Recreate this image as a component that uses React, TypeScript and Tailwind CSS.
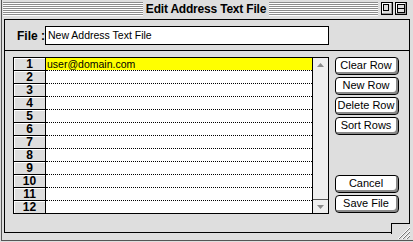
import React from "react";

function Btn({ label }: { label: string }) {
  return (
    <div className="h-[18px] w-[64px] rounded-[4px] border border-black bg-white shadow-[inset_-2px_-2px_0_#8a8a8a,inset_1px_1px_0_#ffffff] flex items-center justify-center pr-[2px] pb-[1px] text-[11px] leading-none text-black">
      {label}
    </div>
  );
}

function Stripes({ className }: { className: string }) {
  return (
    <div
      className={
        "h-[14px] bg-[repeating-linear-gradient(to_bottom,#8c8c8c_0px,#8c8c8c_1px,#ffffff_1px,#ffffff_2px)] " +
        className
      }
    />
  );
}

export default function App() {
  const rows = Array.from({ length: 12 }, (_, i) => i + 1);
  return (
    <div className="relative w-[413px] h-[242px] bg-[#dedede] overflow-hidden font-['Liberation_Sans',Arial,sans-serif] text-black">
      <div className="pl-[1px] h-[242px]">
        <div className="h-[241px] border-l border-b border-[#555555]">
          {/* Title bar */}
          <div className="h-[19px] flex items-start pt-[2px] pl-[1px] pr-[6px]">
            <Stripes className="w-[140px]" />
            <div className="w-[126px] h-[14px] flex items-center justify-center text-[12px] font-bold leading-none tracking-[-0.2px]">
              Edit Address Text File
            </div>
            <Stripes className="flex-1" />
            <div className="ml-[3px] flex gap-[2px]">
              <svg width="12" height="13" viewBox="0 0 12 13">
                <rect x="0.5" y="0.5" width="11" height="12" fill="#dedede" stroke="#000" />
                <rect x="1" y="1" width="10" height="1" fill="#fff" />
                <rect x="1" y="1" width="1" height="11" fill="#fff" />
                <rect x="1" y="11" width="10" height="1" fill="#999" />
                <rect x="10" y="1" width="1" height="11" fill="#999" />
                <rect x="2.5" y="2.5" width="5" height="6" fill="none" stroke="#000" />
              </svg>
              <svg width="12" height="13" viewBox="0 0 12 13">
                <rect x="0.5" y="0.5" width="11" height="12" fill="#dedede" stroke="#000" />
                <rect x="1" y="1" width="10" height="1" fill="#fff" />
                <rect x="1" y="1" width="1" height="11" fill="#fff" />
                <rect x="1" y="11" width="10" height="1" fill="#999" />
                <rect x="10" y="1" width="1" height="11" fill="#999" />
                <rect x="2.5" y="2.5" width="7" height="8" fill="none" stroke="#000" />
                <rect x="2" y="6" width="8" height="1" fill="#000" />
              </svg>
            </div>
          </div>

          {/* Content panel */}
          <div className="ml-[2px] w-[406px] h-[214px] border border-black bg-[#dedede] flex flex-col">
            <div className="mt-[6px] h-[19px] flex items-center pl-[12px]">
              <div className="w-[28px] text-[12px] font-bold leading-none">File :</div>
              <div className="w-[284px] h-[19px] border border-black bg-white flex items-center pl-[2px] text-[10.5px] leading-none">
                New Address Text File
              </div>
            </div>
            <div className="mt-[5px] border-t border-black" />
            <div className="mt-[6px] flex pl-[8px]">
              {/* Grid */}
              <div className="w-[316px] h-[157px] border border-black flex">
                <div className="flex-1 flex flex-col">
                  {rows.map((n) => (
                    <div key={n} className="flex h-[13px] first:h-[12px]">
                      <div
                        className={
                          "w-[32px] border-r border-black bg-[#dedede] shadow-[inset_1px_1px_0_#ffffff] flex items-center justify-center text-[12px] font-bold leading-none " +
                          (n === 1 ? "" : "border-t border-t-black")
                        }
                      >
                        {n}
                      </div>
                      <div
                        className={
                          "flex-1 flex items-center pl-[1px] text-[10.5px] leading-none " +
                          (n === 1 ? "bg-[#ffff00] " : "bg-white border-t border-dotted border-black ")
                        }
                      >
                        {n === 1 ? "user@domain.com" : ""}
                      </div>
                    </div>
                  ))}
                </div>
                {/* Scrollbar */}
                <div className="w-[16px] border-l border-black bg-[#eeeeee] flex flex-col justify-between">
                  <div className="h-[13px] flex items-center justify-center">
                    <svg width="7" height="4" viewBox="0 0 7 4">
                      <polygon points="3.5,0 7,4 0,4" fill="#8a8a8a" />
                    </svg>
                  </div>
                  <div className="h-[14px] border-t border-[#555555] flex items-center justify-center">
                    <svg width="7" height="4" viewBox="0 0 7 4">
                      <polygon points="0,0 7,0 3.5,4" fill="#8a8a8a" />
                    </svg>
                  </div>
                </div>
              </div>
              {/* Buttons */}
              <div className="ml-[6px] h-[157px] flex flex-col justify-between">
                <div className="flex flex-col gap-[2px]">
                  <Btn label="Clear Row" />
                  <Btn label="New Row" />
                  <Btn label="Delete Row" />
                  <Btn label="Sort Rows" />
                </div>
                <div className="flex flex-col gap-[2px] mb-[1px]">
                  <Btn label="Cancel" />
                  <Btn label="Save File" />
                </div>
              </div>
            </div>
          </div>
        </div>
      </div>

      {/* Grow box */}
      <div className="absolute left-[391px] top-[223px] w-[19px] h-[11px] bg-[#dedede] border-l border-t border-black" />
      <svg className="absolute left-[396px] top-[226px]" width="15" height="14" viewBox="0 0 15 14">
        <line x1="2" y1="13" x2="14" y2="1" stroke="#ffffff" />
        <line x1="3" y1="13" x2="14" y2="2" stroke="#777777" />
        <line x1="6" y1="13" x2="14" y2="5" stroke="#ffffff" />
        <line x1="7" y1="13" x2="14" y2="6" stroke="#777777" />
        <line x1="10" y1="13" x2="14" y2="9" stroke="#ffffff" />
        <line x1="11" y1="13" x2="14" y2="10" stroke="#777777" />
      </svg>
    </div>
  );
}
